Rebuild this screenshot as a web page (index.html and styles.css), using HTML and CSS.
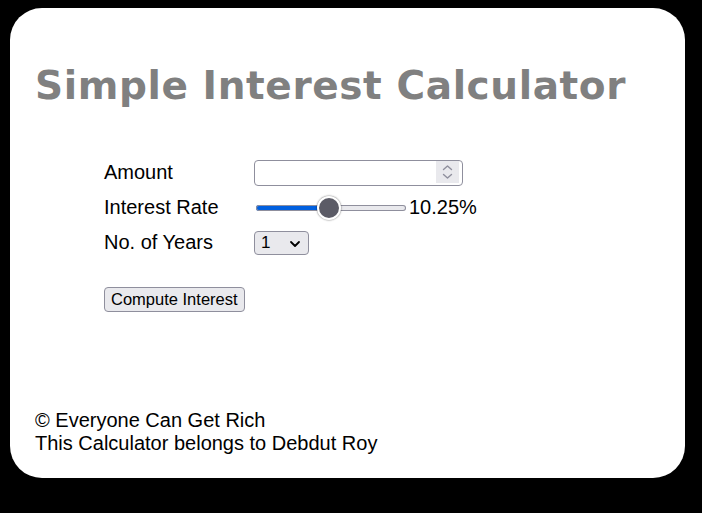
FILE: index.html
```html
<!DOCTYPE html>
<html lang="en">
<head>
<meta charset="utf-8">
<title>Simple Interest Calculator</title>
<link rel="stylesheet" href="styles.css">
</head>
<body>
<main class="card">
  <h1 class="title">Simple Interest Calculator</h1>
  <form class="form">
    <label class="label" for="amount">Amount</label>
    <div class="field">
      <div class="number-wrap">
        <input class="number" id="amount" type="number">
        <span class="spinner" aria-hidden="true">
          <svg width="23" height="22" viewBox="0 0 23 22"><path d="M7.5 8.5 L11.5 5 L15.5 8.5" fill="none" stroke="#8f8f9d" stroke-width="1.4" stroke-linecap="round" stroke-linejoin="round"/><path d="M7.5 13.5 L11.5 17 L15.5 13.5" fill="none" stroke="#8f8f9d" stroke-width="1.4" stroke-linecap="round" stroke-linejoin="round"/></svg>
        </span>
      </div>
    </div>
    <label class="label" for="rate">Interest Rate</label>
    <div class="field"><input class="range" id="rate" type="range" min="1" max="20" step="0.25" value="10.25" style="--fill: 48.9%"><span class="rate-val">10.25%</span></div>
    <label class="label" for="years">No. of Years</label>
    <div class="field">
      <div class="select-wrap">
        <select class="select" id="years"><option>1</option><option>2</option><option>3</option><option>4</option><option>5</option><option>6</option><option>7</option><option>8</option><option>9</option><option>10</option></select>
        <svg class="chev" width="12" height="8" viewBox="0 0 12 8" aria-hidden="true"><path d="M2 2 L6 6 L10 2" fill="none" stroke="#000" stroke-width="1.8" stroke-linecap="round" stroke-linejoin="round"/></svg>
      </div>
    </div>
    <div class="actions"><button class="btn" type="button">Compute Interest</button></div>
  </form>
  <footer class="footer">
    <div>&copy; Everyone Can Get Rich</div>
    <div>This Calculator belongs to Debdut Roy</div>
  </footer>
</main>
</body>
</html>
```

FILE: styles.css
```css
html, body {
  margin: 0;
  background: #000;
}
body {
  padding: 8px 17px 35px 10px;
  height: 513px;
  box-sizing: border-box;
}
.card {
  background: #fff;
  border-radius: 32px;
  height: 470px;
  box-sizing: border-box;
  padding: 56px 25px 0 25px;
  display: flex;
  flex-direction: column;
  font-family: "Liberation Sans", Arial, sans-serif;
  font-size: 20px;
  color: #000;
}
.title {
  margin: 0;
  font-family: "DejaVu Sans", Verdana, sans-serif;
  font-weight: bold;
  font-size: 39px;
  letter-spacing: 0.6px;
  line-height: 44px;
  color: #808080;
}
.form {
  margin: 47px 0 0 69px;
  display: grid;
  grid-template-columns: 150px auto;
  grid-template-rows: 35px 35px 35px auto;
  align-items: center;
  justify-content: start;
}
.label {
  line-height: 23px;
}
.field {
  display: flex;
  align-items: center;
}
.number-wrap {
  position: relative;
  display: flex;
}
.number {
  -moz-appearance: textfield;
  appearance: textfield;
  box-sizing: border-box;
  width: 209px;
  height: 26px;
  margin: 0;
  padding: 0 30px 0 4px;
  border: 1px solid #8f8f9d;
  border-radius: 4px;
  background: #fff;
  font: 16px "Liberation Sans", Arial, sans-serif;
  outline: none;
}
.number::-webkit-inner-spin-button,
.number::-webkit-outer-spin-button {
  -webkit-appearance: none;
  margin: 0;
}
.spinner {
  position: absolute;
  top: 1px;
  right: 4px;
  width: 23px;
  height: 22px;
  background: #e9e9ed;
  display: flex;
  pointer-events: none;
}
.range {
  -webkit-appearance: none;
  appearance: none;
  width: 150px;
  height: 26px;
  margin: 0 0 0 2px;
  padding: 0;
  background: transparent;
}
.range::-webkit-slider-runnable-track {
  height: 6px;
  box-sizing: border-box;
  border-radius: 3px;
  background: linear-gradient(to right, #0060df 0, #0060df var(--fill), #e9e9ed var(--fill), #e9e9ed 100%);
  box-shadow: inset 0 0 0 1px #8f8f9d;
}
.range::-webkit-slider-thumb {
  -webkit-appearance: none;
  appearance: none;
  width: 24px;
  height: 24px;
  margin-top: -9px;
  box-sizing: border-box;
  border-radius: 50%;
  background: #5b5b66;
  border: 2px solid #fff;
  box-shadow: 0 0 1.5px 0.5px rgba(0, 0, 0, 0.35);
}
.rate-val {
  margin-left: 3px;
}
.select-wrap {
  position: relative;
  display: flex;
}
.select {
  -webkit-appearance: none;
  appearance: none;
  box-sizing: border-box;
  width: 55px;
  height: 24px;
  margin: 0;
  padding: 0 0 0 6px;
  border: 1px solid #8f8f9d;
  border-radius: 4px;
  background: #e9e9ed;
  color: #000;
  font: 17px "Liberation Sans", Arial, sans-serif;
  outline: none;
}
.chev {
  position: absolute;
  top: 9px;
  right: 8px;
  pointer-events: none;
}
.actions {
  grid-column: 1 / span 2;
  margin-top: 27px;
}
.btn {
  box-sizing: border-box;
  height: 25px;
  margin: 0;
  padding: 0 6px;
  border: 1px solid #8f8f9d;
  border-radius: 4px;
  background: #e9e9ed;
  color: #000;
  font: 16.5px "Liberation Sans", Arial, sans-serif;
}
.footer {
  margin-top: auto;
  margin-bottom: 23px;
  line-height: 23px;
}
```
